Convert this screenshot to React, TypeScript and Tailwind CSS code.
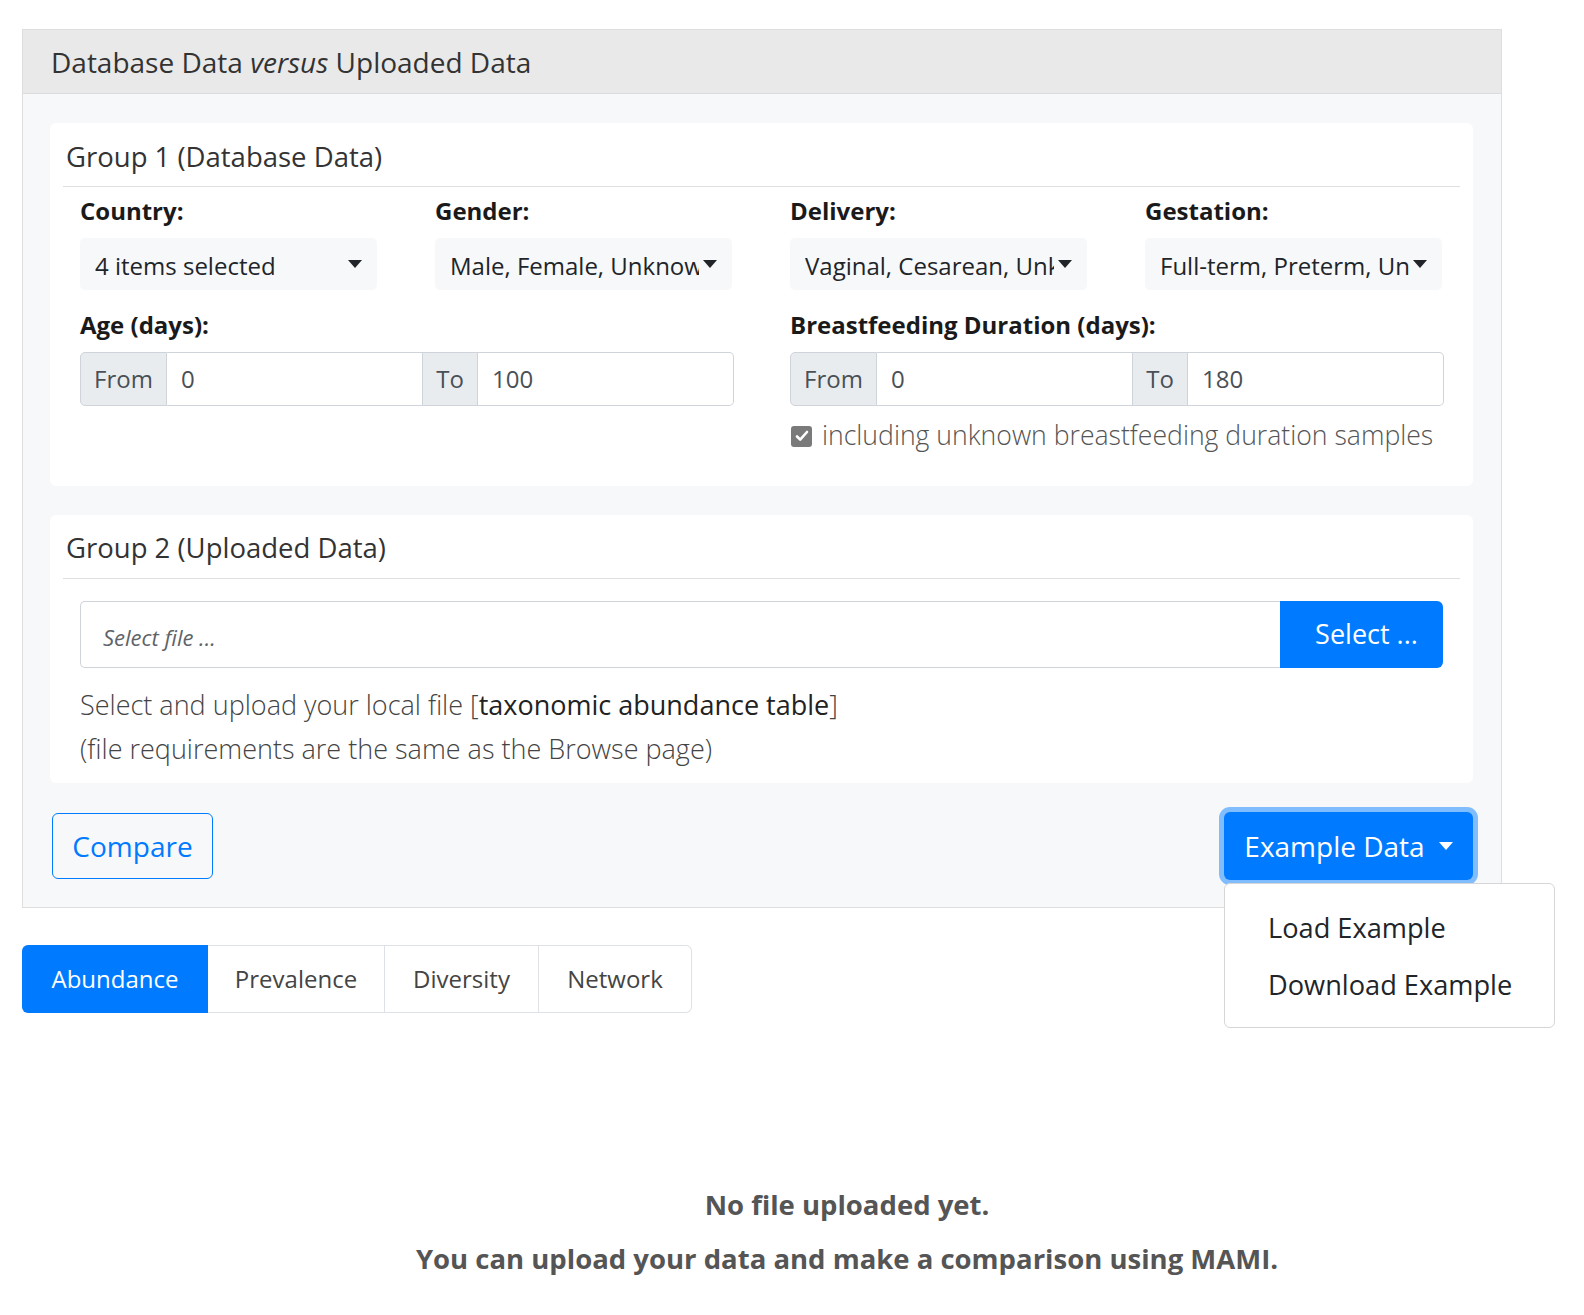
import React from "react";

const font = "font-['Open_Sans','Noto_Sans',sans-serif]";

function Caret({ className = "" }: { className?: string }) {
  return (
    <svg className={className} width="14" height="8" viewBox="0 0 14 8" fill="currentColor">
      <path d="M0 0h14L7 8z" />
    </svg>
  );
}

function FakeSelect({ value }: { value: string }) {
  return (
    <div className="h-[52px] w-[297px] rounded-[5px] bg-[#f7f8f9] pl-[15px] pr-[15px] pt-[3px] flex items-center text-[24px] text-[#212529]">
      <span className="flex-1 min-w-0 overflow-hidden whitespace-nowrap">{value}</span>
      <Caret className="shrink-0 ml-[4px] -mt-[4px] text-[#212529]" />
    </div>
  );
}

function RangeGroup({ from, to }: { from: string; to: string }) {
  return (
    <div className="flex h-[54px] w-[654px] text-[24px]">
      <div className="w-[87px] shrink-0 flex items-center justify-center bg-[#e9ecef] border border-[#ced4da] rounded-l-[5px] text-[#495057]">
        From
      </div>
      <div className="flex-1 flex items-center px-[14px] border-y border-[#ced4da] bg-white text-[#495057]">
        {from}
      </div>
      <div className="w-[56px] shrink-0 flex items-center justify-center bg-[#e9ecef] border border-[#ced4da] text-[#495057]">
        To
      </div>
      <div className="flex-1 flex items-center px-[14px] border-y border-r border-[#ced4da] rounded-r-[5px] bg-white text-[#495057]">
        {to}
      </div>
    </div>
  );
}

export default function App() {
  return (
    <div className={`${font} min-h-[1315px] bg-white pt-[29px] pl-[22px] text-[#212529]`}>
      {/* Main card */}
      <div className="w-[1480px] border border-[#dedede] bg-[#f7f8f9]">
        <div className="h-[64px] bg-[#e9e9e9] border-b border-[#dcdcdc] pl-[28px] flex items-center text-[28px] text-[#333]">
          Database Data&nbsp;<i>versus</i>&nbsp;Uploaded Data
        </div>

        <div className="pt-[29px] pl-[27px] pr-[28px] pb-[27px]">
          {/* Group 1 */}
          <div className="bg-white rounded-[6px] px-[13px] pt-[12px] pb-[35px]">
            <div className="h-[44px] leading-[44px] pl-[3px] text-[27.5px] text-[#333]">Group 1 (Database Data)</div>
            <div className="mt-[7px] border-t border-[#e0e0e0]" />
            <div className="px-[17px]">
              <div className="grid grid-cols-4 gap-x-[57px] mt-[9px]">
                {[
                  ["Country:", "4 items selected"],
                  ["Gender:", "Male, Female, Unknown"],
                  ["Delivery:", "Vaginal, Cesarean, Unknown"],
                  ["Gestation:", "Full-term, Preterm, Unknown"],
                ].map(([label, value]) => (
                  <div key={label}>
                    <div className="h-[30px] leading-[30px] text-[24px] font-bold text-[#1a1a1a]">{label}</div>
                    <div className="mt-[12px]">
                      <FakeSelect value={value} />
                    </div>
                  </div>
                ))}
              </div>
              <div className="grid grid-cols-2 gap-x-[57px] mt-[20px]">
                <div>
                  <div className="h-[30px] leading-[30px] text-[24px] font-bold text-[#1a1a1a]">Age (days):</div>
                  <div className="mt-[12px]">
                    <RangeGroup from="0" to="100" />
                  </div>
                </div>
                <div>
                  <div className="h-[30px] leading-[30px] text-[24px] font-bold text-[#1a1a1a]">
                    Breastfeeding Duration (days):
                  </div>
                  <div className="mt-[12px]">
                    <RangeGroup from="0" to="180" />
                  </div>
                  <div className="mt-[15px] h-[30px] flex items-center">
                    <span className="w-[21px] h-[21px] ml-[1px] rounded-[3px] bg-[#7a7a7a] flex items-center justify-center">
                      <svg width="14" height="12" viewBox="0 0 14 12" fill="none" stroke="white" strokeWidth="2.6" strokeLinecap="round" strokeLinejoin="round">
                        <path d="M2 6.5l3.2 3.2L12 2" />
                      </svg>
                    </span>
                    <span className="ml-[10px] text-[26.6px] font-light text-[#555] whitespace-nowrap">
                      including unknown breastfeeding duration samples
                    </span>
                  </div>
                </div>
              </div>
            </div>
          </div>

          {/* Group 2 */}
          <div className="mt-[29px] bg-white rounded-[6px] px-[13px] pt-[11px] pb-[12px]">
            <div className="h-[44px] leading-[44px] pl-[3px] text-[27.5px] text-[#333]">Group 2 (Uploaded Data)</div>
            <div className="mt-[8px] border-t border-[#e0e0e0]" />
            <div className="px-[17px]">
              <div className="mt-[22px] flex h-[67px]">
                <div className="flex-1 flex items-center pl-[22px] pt-[6px] border border-r-0 border-[#ced4da] rounded-l-[5px] text-[22px] italic text-[#5f6368]">
                  Select file ...
                </div>
                <button className="w-[163px] pl-[10px] bg-[#007bff] text-white text-[27px] rounded-r-[6px] flex items-center justify-center">
                  Select ...
                </button>
              </div>
              <div className="mt-[15px] leading-[44px] text-[27px] font-light text-[#444]">
                <div>
                  Select and upload your local file [<span className="font-normal text-[#222]">taxonomic abundance table</span>]
                </div>
                <div>(file requirements are the same as the Browse page)</div>
              </div>
            </div>
          </div>

          {/* Buttons */}
          <div className="mt-[29px] flex items-center justify-between">
            <button className="ml-[2px] h-[66px] w-[161px] border border-[#007bff] rounded-[6px] text-[#007bff] text-[28px] bg-transparent">
              Compare
            </button>
            <div className="relative">
              <button className="h-[68px] w-[249px] bg-[#007bff] rounded-[6px] text-white text-[28px] flex items-center justify-center gap-[14px] ring-[5px] ring-[#80bdff]">
                Example Data
                <Caret className="text-white" />
              </button>
              <div className="absolute left-0 top-full mt-[3px] w-[331px] h-[145px] bg-white border border-[#d6d6d6] rounded-[6px] flex flex-col justify-center pl-[43px] text-[27.2px] text-[#212529] z-10">
                <div className="h-[57px] leading-[57px]">Load Example</div>
                <div className="h-[57px] leading-[57px]">Download Example</div>
              </div>
            </div>
          </div>
        </div>
      </div>

      {/* Tabs */}
      <div className="mt-[37px] flex h-[68px] text-[24px]">
        <div className="w-[186px] bg-[#007bff] text-white rounded-l-[6px] flex items-center justify-center">Abundance</div>
        <div className="w-[177px] border-y border-r border-[#dee2e6] text-[#444] flex items-center justify-center">Prevalence</div>
        <div className="w-[154px] border-y border-r border-[#dee2e6] text-[#444] flex items-center justify-center">Diversity</div>
        <div className="w-[153px] border-y border-r border-[#dee2e6] rounded-r-[6px] text-[#444] flex items-center justify-center">Network</div>
      </div>

      {/* Empty state */}
      <div className="mt-[170px] pl-[88px] text-center font-bold text-[27.5px] text-[#555]">
        <div className="leading-[44px]">No file uploaded yet.</div>
        <div className="mt-[10px] leading-[44px]">You can upload your data and make a comparison using MAMI.</div>
      </div>
    </div>
  );
}
